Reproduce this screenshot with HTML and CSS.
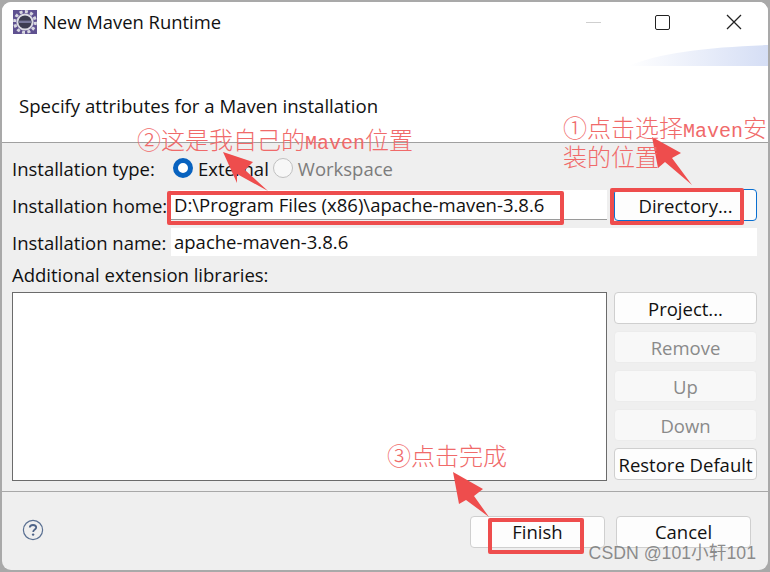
FILE: index.html
```html
<!DOCTYPE html>
<html lang="en">
<head>
<meta charset="utf-8">
<title>New Maven Runtime</title>
<link rel="stylesheet" href="styles.css">
</head>
<body>
<div class="window">
  <header class="header">
    <div class="titlebar">
      <svg class="app-icon" width="24" height="24" viewBox="0 0 24 24">
        <rect width="24" height="24" fill="#5f5190"/>
        <circle cx="12" cy="12" r="10.4" fill="none" stroke="#d8d8e0" stroke-width="3" stroke-dasharray="3 2.4"/>
        <circle cx="12" cy="12" r="8.6" fill="#dcdce4"/>
        <circle cx="12" cy="12" r="6.6" fill="#3c3c50"/>
        <rect x="5.6" y="10.6" width="12.8" height="2.4" fill="#77779a"/>
      </svg>
      <span class="title">New Maven Runtime</span>
      <div class="controls">
        <span class="ctl-min"></span>
        <span class="ctl-max"></span>
        <svg class="ctl-close" width="16" height="16" viewBox="0 0 16 16"><path d="M1 1L15 15M15 1L1 15" stroke="#222" stroke-width="1.3" fill="none"/></svg>
      </div>
    </div>
    <svg class="banner" width="140" height="21" viewBox="0 0 140 21">
      <defs><linearGradient id="bg" x1="0" x2="1" y1="0" y2="0"><stop offset="0" stop-color="#fff"/><stop offset="1" stop-color="#d5def5"/></linearGradient></defs>
      <path d="M0 21C30 8 80 2 140 0V21Z" fill="url(#bg)"/>
    </svg>
    <p class="desc">Specify attributes for a Maven installation</p>
  </header>

  <main class="body">
    <div class="row">
      <span class="label">Installation type:</span>
      <div class="radios">
        <span class="radio on"></span><span class="radio-text">External</span>
        <span class="radio off"></span><span class="radio-text muted">Workspace</span>
      </div>
    </div>
    <div class="row">
      <span class="label">Installation home:</span>
      <span class="input home">D:\Program Files (x86)\apache-maven-3.8.6</span>
      <button class="btn focus">Directory...</button>
    </div>
    <div class="row">
      <span class="label">Installation name:</span>
      <span class="input name">apache-maven-3.8.6</span>
    </div>
    <div class="extlabel">Additional extension libraries:</div>
    <div class="libs">
      <div class="list"></div>
      <div class="side">
        <button class="btn">Project...</button>
        <button class="btn off">Remove</button>
        <button class="btn off">Up</button>
        <button class="btn off">Down</button>
        <button class="btn">Restore Default</button>
      </div>
    </div>
  </main>

  <footer class="footer">
    <svg class="help" width="22" height="22" viewBox="0 0 22 22">
      <circle cx="11" cy="11" r="9.6" fill="none" stroke="#5a7092" stroke-width="1.2"/>
      <path d="M7.8 8.6C7.8 6.8 9.2 6 11 6C12.9 6 14.2 7 14.2 8.6C14.2 10.6 11.2 10.6 11.2 13" fill="none" stroke="#4f6488" stroke-width="1.8"/>
      <circle cx="11.1" cy="15.6" r="1.2" fill="#4f6488"/>
    </svg>
    <button class="btn wide finish">Finish</button>
    <button class="btn wide">Cancel</button>
  </footer>
</div>

<div class="mark box-home"></div>
<div class="mark box-dir"></div>
<div class="mark box-finish"></div>
<svg class="arrows" width="770" height="572" viewBox="0 0 770 572">
  <polygon points="652,137 681,153 672,158 692,185 665,162 658,168" fill="#ee4d4d"/>
  <polygon points="223,152 253,162 245,170 268,191 237,174 237,183" fill="#ee4d4d"/>
  <polygon points="453,472 483,489 474,496 489,517 466,500 459,504" fill="#ee4d4d"/>
</svg>
<div class="note note-two">②这是我自己的<span class="latin">Maven</span>位置</div>
<div class="note note-one">①点击选择<span class="latin">Maven</span>安<br>装的位置</div>
<div class="note note-three">③点击完成</div>
<div class="watermark">CSDN @101小轩101</div>
</body>
</html>
```

FILE: styles.css
```css
* { box-sizing: border-box; }
html, body { margin: 0; height: 100%; }
body {
  width: 770px;
  height: 572px;
  overflow: hidden;
  background: #a9a9a9;
  padding: 2px;
  position: relative;
  font-family: "Open Sans", "Noto Sans", sans-serif;
  font-size: 18.5px;
  color: #111;
}
.window {
  width: 766px;
  height: 568px;
  border-radius: 9px;
  overflow: hidden;
  background: #efefef;
  display: flex;
  flex-direction: column;
}
.header {
  height: 141px;
  flex: none;
  background: #fff;
  border-bottom: 1px solid #a0a0a0;
  position: relative;
}
.titlebar {
  display: flex;
  align-items: center;
  height: 24px;
  margin-top: 8px;
  padding-left: 11px;
}
.app-icon { flex: none; }
.title { margin-left: 6px; margin-top: -2px; font-size: 18.4px; }
.controls {
  margin-left: auto;
  display: flex;
  align-items: center;
  padding-right: 26px;
}
.ctl-min { width: 15px; height: 1px; background: #cfcfcf; margin-right: 54px; }
.ctl-max { width: 15px; height: 15px; border: 1.5px solid #222; border-radius: 2px; margin-right: 56px; }
.banner { position: absolute; right: 0; top: 43px; }
.desc { position: absolute; left: 17px; top: 91px; margin: 0; font-size: 18.6px; line-height: 26px; }

.body { flex: none; height: 349px; border-bottom: 1px solid #a8a8a8; padding: 10px 11px 0 10px; }
.row { display: flex; align-items: center; height: 30px; margin-bottom: 7px; }
.label { width: 159px; flex: none; white-space: nowrap; }
.radios { display: flex; align-items: center; }
.radio { width: 20px; height: 20px; border-radius: 50%; flex: none; margin-left: 2px; }
.radio.on { background: #fff; border: 5px solid #0862bf; }
.radio.off { background: #f7f7f7; border: 1px solid #c0c0c0; margin-left: 4px; }
.radio-text { margin-left: 5px; }
.muted { color: #7c7c7c; }
.input {
  background: #fff;
  height: 28px;
  line-height: 27px;
  padding-left: 3px;
  white-space: nowrap;
  display: block;
}
.input.home { width: 436px; height: 30px; line-height: 30px; border-bottom: 1px solid #9a9a9a; }
.input.name { width: 586px; }
.btn {
  font: inherit;
  color: #111;
  background: #fdfdfd;
  border: 1px solid #cfcfcf;
  border-radius: 4px;
  width: 143px;
  height: 32px;
  padding: 0;
  flex: none;
}
.btn.focus { margin-left: 7px; border: 1px solid #0a6fd0; }
.btn.off { background: #f8f8f8; border-color: #ececec; color: #8a8a8a; }
.extlabel { line-height: 24px; height: 24px; margin-top: -1px; margin-bottom: 5px; }
.libs { display: flex; gap: 7px; }
.list { width: 595px; height: 189px; background: #fff; border: 1px solid #6b6b6b; flex: none; }
.side { display: flex; flex-direction: column; gap: 7px; }
.side .btn { height: 32px; }
.footer {
  flex: 1;
  display: flex;
  align-items: flex-start;
  padding: 24px 17px 0 20px;
}
.help { margin-top: 3px; margin-right: auto; }
.btn.wide { width: 135px; height: 32px; padding-bottom: 2px; }
.btn.wide + .btn.wide { margin-left: 11px; }

.mark { position: absolute; border: 4px solid #ee4d4d; border-radius: 2px; }
.box-home { left: 167px; top: 191px; width: 397px; height: 34px; }
.box-dir { left: 610px; top: 188px; width: 134px; height: 37px; }
.box-finish { left: 488px; top: 518px; width: 96px; height: 36px; }
.arrows { position: absolute; left: 0; top: 0; }
.note {
  position: absolute;
  font-family: "Noto Sans CJK SC", "Liberation Serif", serif;
  font-size: 24px;
  line-height: 24px;
  color: #f06a6a;
  white-space: nowrap;
  font-weight: 300;
}
.latin { font-family: "Liberation Mono", monospace; font-size: 20px; }
.note-two { left: 137px; top: 127px; }
.note-one { left: 563px; top: 115px; }
.note-three { left: 387px; top: 443px; }
.watermark {
  position: absolute;
  right: 14px;
  top: 543px;
  font-family: "Liberation Sans", "Noto Sans CJK SC", sans-serif;
  font-size: 17.7px;
  line-height: 20px;
  color: rgba(120, 120, 120, 0.85);
  white-space: nowrap;
}
```
